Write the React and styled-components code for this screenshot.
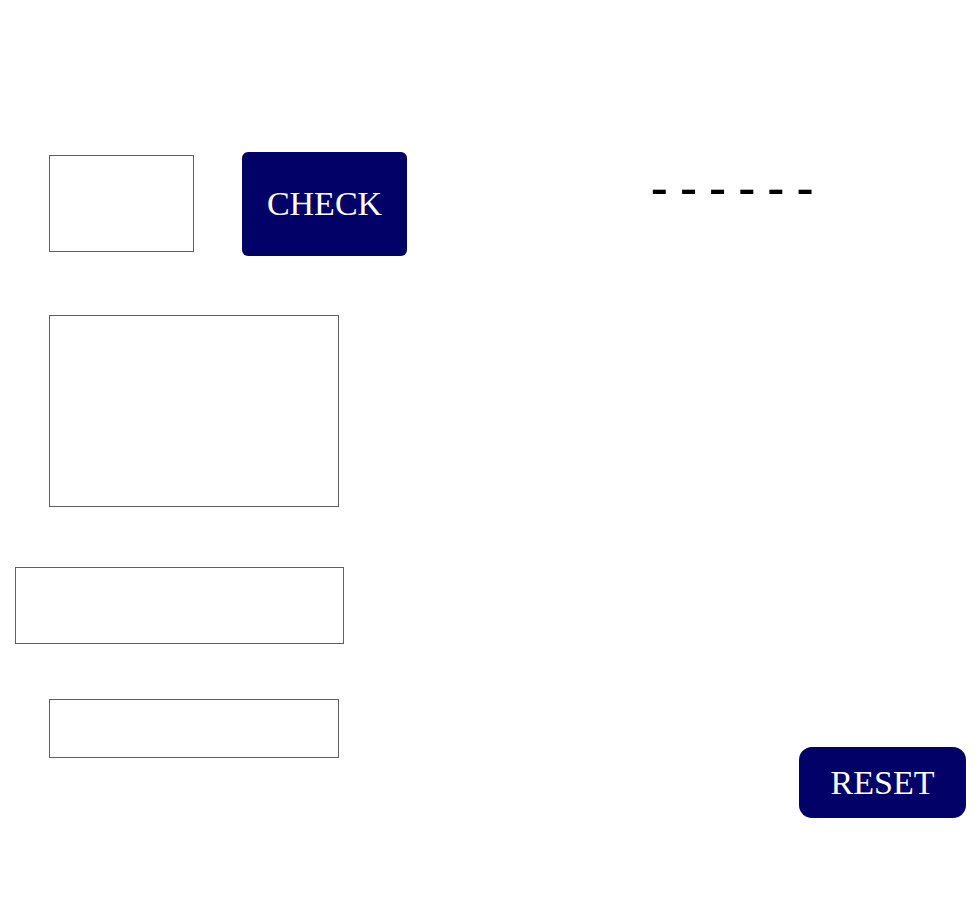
import React from "react";
import styled, { createGlobalStyle } from "styled-components";

const GlobalStyle = createGlobalStyle`
  body {
    margin: 0;
    background: #ffffff;
    font-family: "Liberation Serif", "Times New Roman", serif;
  }
`;

const Page = styled.div`
  padding-top: 152px;
  padding-right: 14px;
  padding-bottom: 80px;
`;

const TopRow = styled.div`
  display: flex;
  align-items: flex-start;
`;

const Field = styled.div`
  box-sizing: border-box;
  width: ${(p) => p.w}px;
  height: ${(p) => p.h}px;
  margin-left: ${(p) => p.left}px;
  margin-top: ${(p) => p.top || 0}px;
  border: 1px solid #5f5f5f;
  background: #ffffff;
  flex-shrink: 0;
`;

const NavyButton = styled.button`
  box-sizing: border-box;
  width: ${(p) => p.w}px;
  height: ${(p) => p.h}px;
  margin-left: ${(p) => p.left || 0}px;
  margin-top: ${(p) => p.top || 0}px;
  border: none;
  border-radius: ${(p) => p.radius}px;
  background: #010168;
  color: #ffffff;
  font-family: "Liberation Serif", "Times New Roman", serif;
  font-size: 34px;
  padding: 0;
  flex-shrink: 0;
  cursor: pointer;
`;

const Blanks = styled.div`
  margin-left: 244px;
  margin-top: 10px;
  font-family: "Liberation Serif", "Times New Roman", serif;
  font-weight: bold;
  font-size: 50px;
  line-height: 50px;
  color: #000000;
  white-space: pre;
`;

const BottomRow = styled.div`
  display: flex;
  justify-content: space-between;
  align-items: flex-start;
`;

export default function App() {
  return (
    <Page>
      <GlobalStyle />
      <TopRow>
        <Field w={145} h={97} left={49} top={3} />
        <NavyButton w={165} h={104} left={48} radius={6}>
          CHECK
        </NavyButton>
        <Blanks>- - - - - -</Blanks>
      </TopRow>
      <Field w={290} h={192} left={49} top={59} />
      <Field w={329} h={77} left={15} top={60} />
      <BottomRow>
        <Field w={290} h={59} left={49} top={55} />
        <NavyButton w={167} h={71} top={103} radius={13}>
          RESET
        </NavyButton>
      </BottomRow>
    </Page>
  );
}
